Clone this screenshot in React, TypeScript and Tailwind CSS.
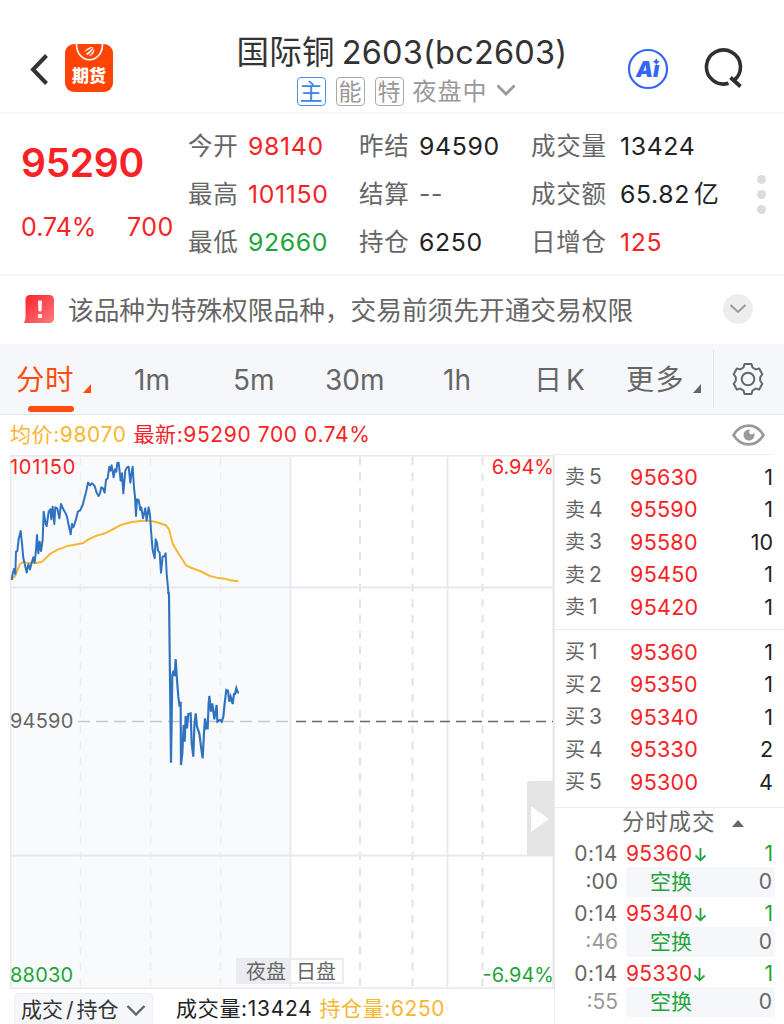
const asks = [
  { label: '卖5', price: '95630', qty: '1' },
  { label: '卖4', price: '95590', qty: '1' },
  { label: '卖3', price: '95580', qty: '10' },
  { label: '卖2', price: '95450', qty: '1' },
  { label: '卖1', price: '95420', qty: '1' },
]

const bids = [
  { label: '买1', price: '95360', qty: '1' },
  { label: '买2', price: '95350', qty: '1' },
  { label: '买3', price: '95340', qty: '1' },
  { label: '买4', price: '95330', qty: '2' },
  { label: '买5', price: '95300', qty: '4' },
]

const trades = [
  { time: '0:14', sec: ':00', price: '95360', secColor: 'text-[#666]' },
  { time: '0:14', sec: ':46', price: '95340', secColor: 'text-[#999]' },
  { time: '0:14', sec: ':55', price: '95330', secColor: 'text-[#999]' },
]

const stats = [
  [
    { label: '今开', value: '98140', color: 'text-[#f82226]' },
    { label: '最高', value: '101150', color: 'text-[#f82226]' },
    { label: '最低', value: '92660', color: 'text-[#1ea53a]' },
  ],
  [
    { label: '昨结', value: '94590', color: 'text-[#222]' },
    { label: '结算', value: '--', color: 'text-[#666]' },
    { label: '持仓', value: '6250', color: 'text-[#222]' },
  ],
  [
    { label: '成交量', value: '13424', color: 'text-[#222]' },
    { label: '成交额', value: '65.82', unit: '亿', color: 'text-[#222]' },
    { label: '日增仓', value: '125', color: 'text-[#f82226]' },
  ],
]

const openLine =
  '35,390 38,372 42,357 46,372 48,305 52,303 56,268 62,243 66,280 70,325 75,345 80,368 85,343 90,358 94,342 100,322 104,338 108,300 111,255 115,310 119,275 123,303 128,270 131,185 137,222 140,228 146,185 151,178 154,208 158,170 163,222 166,172 172,175 178,205 183,162 190,178 196,188 201,200 206,225 212,253 216,222 220,232 227,212 234,184 240,182 248,165 258,127 264,98 270,106 276,100 284,108 290,128 296,138 300,130 304,112 309,115 314,128 318,90 323,85 328,50 332,62 335,46 341,82 345,58 349,65 352,38 356,38 362,92 366,70 370,130 376,62 381,52 386,50 391,98 394,75 398,50 402,112 405,140 408,198 411,148 416,150 421,180 424,172 429,205 436,175 440,212 446,172 450,195 453,240 458,300 464,325 467,268 471,278 474,302 479,308 483,368 488,320 494,318 497,310 500,370 505,425 507,435'

const dropLine =
  '115,95 117,105 123,608 127,345 131,332 134,348 137,297 141,360 145,410 149,440 152,425 153,615 157,580 161,495 164,545 167,468 171,505 175,462 182,460 185,550 190,590 193,500 197,460 201,500 208,520 213,560 218,595 222,520 225,475 229,505 233,505 236,430 238,408 243,455 247,430 253,478 260,435 262,485 270,480 275,485 280,470 284,430 289,390 294,392 298,425 302,410 308,432 312,402 315,402 319,385 323,397 327,397'

const averageLine =
  '35,388 45,378 52,362 60,342 68,337 90,339 110,339 127,335 150,312 175,298 200,289 250,279 262,270 290,257 315,250 340,237 365,224 395,216 430,212 450,212 470,217 498,226 507,238 518,280 530,302 545,325 558,346 575,354 600,363 630,378 650,383 675,386 690,391 715,394'

function Header() {
  return (
    <header className="flex h-[114px] border-b-2 border-[#f6f6f6]">
      <div className="flex w-[190px] items-start pt-[44px] pl-[29px]">
        <svg width="20" height="50" viewBox="0 0 20 50" fill="none">
          <path d="M17.500 11.500L4 25.500L17.500 39.500" stroke="#333" strokeWidth="4" />
        </svg>
        <div className="ml-[16px] flex h-[48px] w-[48px] flex-col items-center overflow-hidden rounded-[9px] bg-[#ff4405]">
          <svg width="48" height="19" viewBox="0 0 48 19" fill="none">
            <path d="M11.500 0C11.500 21 37.500 21 37.500 0" stroke="#fff" strokeWidth="1.600" />
            <path d="M19 8C22 4 25 2.500 28.500 3C26 4 23 6 19 8ZM21 9.500C24 8 26.500 5 28.500 3.500C28 6 26 8.500 22.500 11ZM24 11.500C27 9.500 28.500 7 29 4.500C30 8 28 10.500 25 12Z" fill="#fff" />
          </svg>
          <span className="mt-[3px] text-[17px] leading-[20px] font-black text-white">期货</span>
        </div>
      </div>
      <div className="flex w-[424px] flex-col items-center">
        <h1 className="mt-[33px] text-[32.500px] leading-[40px] tracking-[0.200px] whitespace-nowrap text-[#333]">
          国际铜<span className="ml-[7px]">2603(bc2603)</span>
        </h1>
        <div className="mt-[4px] ml-[8px] flex items-center text-[24px] leading-[28px] text-[#999]">
          <span className="flex h-[29px] w-[29px] items-center justify-center rounded-[4px] border-[1.500px] border-[#4a90e8] text-[23px] text-[#3a87ea]">主</span>
          <span className="ml-[10px] flex h-[29px] w-[29px] items-center justify-center rounded-[4px] border-[1.500px] border-[#aaa] text-[23px]">能</span>
          <span className="ml-[10px] flex h-[29px] w-[29px] items-center justify-center rounded-[4px] border-[1.500px] border-[#aaa] text-[23px]">特</span>
          <span className="ml-[9px] tracking-[1px]">夜盘中</span>
          <svg className="mb-[4px] ml-[8px]" width="20" height="14" viewBox="0 0 20 14" fill="none">
            <path d="M1.500 2.500L10 11L18.500 2.500" stroke="#999" strokeWidth="2.800" />
          </svg>
        </div>
      </div>
      <div className="flex items-start pt-[48px] pl-[13px]">
        <svg width="42" height="42" viewBox="0 0 42 42">
          <circle cx="21" cy="21" r="19" fill="#fff" stroke="#3366f5" strokeWidth="2.200" />
          <text x="9" y="28.500" fontSize="21.500" fontWeight="900" fontStyle="italic" fill="#3366f5">
            Ai
          </text>
          <path d="M24 10H34V16.500H24Z" fill="#fff" />
          <path d="M29.300 10.200L30.500 12.500L32.800 13.700L30.500 14.900L29.300 17.200L28.100 14.900L25.800 13.700L28.100 12.500Z" fill="#3366f5" />
        </svg>
        <svg className="ml-[33px]" width="42" height="42" viewBox="0 0 42 42" fill="none">
          <path d="M27.500 35.200A17 17 0 1 1 33 32.300" transform="translate(-1 0)" stroke="#303030" strokeWidth="3.600" />
          <path d="M28.500 29.500L38.500 38.500" stroke="#303030" strokeWidth="3.800" />
        </svg>
      </div>
    </header>
  )
}

function Quote() {
  return (
    <section className="flex h-[162px] border-b-2 border-[#f6f6f6] text-[24.500px]">
      <div className="w-[188px] pl-[21px] text-[#f82226]">
        <div className="mt-[26px] text-[39px] leading-[46px] font-semibold tracking-[-0.300px]">95290</div>
        <div className="mt-[25px] flex text-[25px] leading-[32px]">
          <span className="w-[106px]">0.74%</span>
          <span className="tracking-[0.500px]">700</span>
        </div>
      </div>
      {stats.map((col, i) => (
        <div key={i} className={i === 2 ? 'flex flex-col pt-[8px] pl-px' : 'flex w-[171px] flex-col pt-[8px]'}>
          {col.map((s) => (
            <div key={s.label} className="flex h-12 items-center whitespace-nowrap">
              <span className={i === 2 ? 'w-[89px] tracking-[0.800px] text-[#666]' : 'w-[60px] tracking-[0.800px] text-[#666]'}>{s.label}</span>
              <span className={`text-[24.800px] leading-[46px] tracking-[0.650px] ${s.color}`}>
                {s.value}
                {'unit' in s && <span className="ml-[4px]">{s.unit}</span>}
              </span>
            </div>
          ))}
        </div>
      ))}
      <div className="mr-[18px] ml-auto flex flex-col justify-center gap-[6px]">
        <i className="size-[9px] rounded-full bg-[#dcdcdc]" />
        <i className="size-[9px] rounded-full bg-[#dcdcdc]" />
        <i className="size-[9px] rounded-full bg-[#dcdcdc]" />
      </div>
    </section>
  )
}

function Notice() {
  return (
    <section className="flex h-[68px] items-center pr-[31px] pl-[24px]">
      <svg className="mb-[2px]" width="30" height="28" viewBox="0 0 30 28">
        <defs>
          <linearGradient id="alert" x1="0" y1="0" x2="1" y2="1">
            <stop offset="0" stopColor="#fb2029" />
            <stop offset="1" stopColor="#ff7b7e" />
          </linearGradient>
        </defs>
        <path d="M1.500 5Q1.500 0 6.500 0H25Q30 0 30 5V23Q30 28 25 28H0Q1.500 25 1.500 22Z" fill="url(#alert)" />
        <path d="M14.500 6H17.500L17 16H15Z" fill="#fff" stroke="#fff" strokeLinejoin="round" />
        <circle cx="16" cy="21" r="2.200" fill="#fff" />
      </svg>
      <p className="ml-[14px] pt-px text-[25.700px] leading-[36px] whitespace-nowrap text-[#666]">该品种为特殊权限品种，交易前须先开通交易权限</p>
      <div className="mb-[2px] ml-auto flex size-[30px] items-center justify-center rounded-full bg-[#ededed]">
        <svg width="18" height="12" viewBox="0 0 18 12" fill="none">
          <path d="M1.500 2L9 9L16.500 2" stroke="#999" strokeWidth="2" />
        </svg>
      </div>
    </section>
  )
}

function Tabs() {
  return (
    <nav className="flex h-[71px] border-b border-[#e6e6ea] bg-[#f6f7fa] text-[28px] leading-[40px] text-[#666]">
      <div className="w-[134px] pt-[16px] pl-[16px] text-[#ff4d0d]">
        <div className="flex items-end whitespace-nowrap">
          <span className="text-[28.500px] tracking-[0.500px]">分时</span>
          <svg className="mb-[7px] ml-[9px]" width="8" height="9" viewBox="0 0 8 9">
            <path d="M8 0V9H0Z" fill="#ff4d0d" />
          </svg>
        </div>
        <div className="mt-[6px] ml-[12px] h-[6px] w-[46px] rounded-full bg-[#ff4d0d]" />
      </div>
      <span className="w-[99px] pt-[16px]">1m</span>
      <span className="w-[92px] pt-[16px]">5m</span>
      <span className="w-[118px] pt-[16px]">30m</span>
      <span className="w-[91px] pt-[16px]">1h</span>
      <span className="w-[92px] pt-[16px]">日<span className="ml-[4px]">K</span></span>
      <div className="flex w-[87px] items-start pt-[16px] whitespace-nowrap">
        <span className="tracking-[1.500px]">更多</span>
        <svg className="mt-[24px] ml-[8px]" width="8" height="9" viewBox="0 0 8 9">
          <path d="M8 0V9H0Z" fill="#666" />
        </svg>
      </div>
      <div className="my-[6px] w-px bg-[#e4e4e8]" />
      <svg className="mt-[18px] ml-[17px]" width="34" height="34" viewBox="-17 -17 34 34" fill="none" stroke="#666" strokeWidth="2" strokeLinejoin="round">
        <path d="M-3.500-15L3.500-15L4.500-11.500L7.700-9.600L11.200-10.500L14.300-4.800L12.200-1.800V1.800L14.300 4.800L11.200 10.500L7.700 9.600L4.500 11.500L3.500 15H-3.500L-4.500 11.500L-7.700 9.600L-11.200 10.500L-14.300 4.800L-12.200 1.800V-1.800L-14.300-4.800L-11.200-10.500L-7.700-9.600L-4.500-11.500Z" />
        <circle r="6.300" />
      </svg>
    </nav>
  )
}

function Chart() {
  return (
    <div className="relative h-[534px] w-[544px]">
      <svg width="544" height="534" viewBox="10 455 544 534" fill="none">
        <rect x="10" y="456" width="280" height="530" fill="#f8fafc" />
        <g stroke="#eeeef2" strokeWidth="1.500" strokeDasharray="8 7.800">
          <path d="M80.500 457V987M150.500 457V987M220.500 457V987" />
        </g>
        <g stroke="#e2e2ea" strokeWidth="2" strokeDasharray="8 7.800">
          <path d="M360 457V987M412.500 457V987M482.500 457V987" />
        </g>
        <path d="M10 587.500H554M10 855.500H554M290.500 457V987M447.500 457V987M10.500 455V989M10 988.500H554" stroke="#e8e8ef" strokeWidth="1.800" />
        <path d="M10 455.500H554M553.500 455V989" stroke="#e6e6ec" strokeWidth="2" />
        <path d="M78 721.500H290" stroke="#c6c8ca" strokeWidth="1.400" strokeDasharray="12 6" />
        <path d="M296 721.500H553" stroke="#666" strokeWidth="1.400" strokeDasharray="10 6" />
        <g transform="translate(0 450) scale(0.3333)" strokeLinejoin="round">
          <polyline points={averageLine} stroke="#f7b733" strokeWidth="6" />
          <polyline points={openLine} stroke="#2f73c0" strokeWidth="6" />
        </g>
        <polyline points={dropLine} transform="translate(130 560) scale(0.3333)" stroke="#2f73c0" strokeWidth="6.500" />
      </svg>
      <span className="absolute top-px left-0 text-[20px] leading-[22px] tracking-[0.700px] text-[#f82226]">101150</span>
      <span className="absolute top-px right-0 text-[20px] leading-[22px] text-[#f82226]">6.94%</span>
      <span className="absolute top-[255px] left-0 text-[20px] leading-[22px] tracking-[0.200px] text-[#666]">94590</span>
      <span className="absolute bottom-[3px] left-0 text-[20px] leading-[22px] tracking-[0.200px] text-[#1ea53a]">88030</span>
      <span className="absolute right-0 bottom-[3px] text-[20px] leading-[22px] text-[#1ea53a]">-6.94%</span>
      <div className="absolute bottom-[5px] left-[226px] flex h-[26px] text-[20px] leading-[28px] text-[#666]">
        <span className="w-[54px] bg-[#ebecf1] pl-[10px]">夜盘</span>
        <span className="w-[54px] border-2 border-l border-[#ebecf1] bg-white pl-[5px] leading-[24px]">日盘</span>
      </div>
      <div className="absolute top-[326px] right-[1px] flex h-[75px] w-[26px] items-center justify-end rounded-l-[3px] bg-[#e4e4e4] pr-[4px]">
        <svg width="18" height="26" viewBox="0 0 18 26">
          <path d="M0 0L18 13L0 26Z" fill="#fff" />
        </svg>
      </div>
    </div>
  )
}

function Book({ rows }: { rows: typeof asks }) {
  return (
    <div>
      {rows.map((r) => (
        <div key={r.label} className="flex h-[32.400px] items-center pr-[11px] pl-[10px] text-[21.500px]">
          <span className="w-[65px] text-[20px] text-[#666]">
            {r.label[0]}
            <span className="ml-[4px] text-[21px]">{r.label[1]}</span>
          </span>
          <span className="tracking-[0.300px] text-[#f82226]">{r.price}</span>
          <span className="ml-auto text-[#222]">{r.qty}</span>
        </div>
      ))}
    </div>
  )
}

function Sidebar() {
  return (
    <aside className="w-[229px]">
      <div className="mr-[11px] h-px bg-[#eee]" />
      <div className="h-[175px] border-b border-[#ebebee] pt-[6px]">
        <Book rows={asks} />
      </div>
      <div className="h-[178px] border-b border-[#ebebee] pt-[6px]">
        <Book rows={bids} />
      </div>
      <div className="flex h-[31px] items-center pb-[3px] pl-[67px] text-[22.500px] leading-[28px] text-[#666]">
        <span className="tracking-[0.800px]">分时成交</span>
        <svg className="mt-[2px] ml-[17px]" width="12" height="7" viewBox="0 0 12 7">
          <path d="M6 0L12 7H0Z" fill="#666" />
        </svg>
      </div>
      {trades.map((t) => (
        <div key={t.sec} className="h-[60px] pr-[9px] text-[21px] leading-[30px]">
          <div className="flex h-[28px] pr-[2px]">
            <span className="w-[63px] text-right tracking-[0.600px] text-[#666]">{t.time}</span>
            <span className="ml-[8px] tracking-[0.300px] text-[#f82226]">{t.price}</span>
            <svg className="mt-[9px] ml-px" width="13" height="14" viewBox="0 0 13 14" fill="none">
              <path d="M6.500 0V12M1.500 7.500L6.500 12.300L11.500 7.500" stroke="#1ea53a" strokeWidth="1.800" />
            </svg>
            <span className="ml-auto text-[#1ea53a]">1</span>
          </div>
          <div className="flex h-[30px] items-center">
            <span className={`w-[63px] text-right ${t.secColor}`}>{t.sec}</span>
            <div className="ml-[8px] flex h-[30px] flex-1 rounded-[3px] bg-[#f6f7fa] pr-[3px] pl-[24px] leading-[29px]">
              <span className="text-[#1ea53a]">空换</span>
              <span className="ml-auto text-[#666]">0</span>
            </div>
          </div>
        </div>
      ))}
    </aside>
  )
}

export default function App() {
  return (
    <div className="h-[1024px] w-[784px] overflow-hidden bg-white font-['Inter','Noto_Sans_CJK_SC',sans-serif]">
      <Header />
      <Quote />
      <Notice />
      <Tabs />
      <div className="flex h-[39px] items-center justify-between pr-[19px] pl-[10px] text-[21px]">
        <p className="tracking-[0.600px] whitespace-nowrap text-[#f82226]">
          <span className="mr-[7px] text-[#f7b733]">均价:98070</span>
          最新:95290 700 0.74%
        </p>
        <svg width="33" height="22" viewBox="0 0 33 22" fill="none">
          <path d="M1.500 11C9-1.500 24-1.500 31.500 11C24 23.500 9 23.500 1.500 11Z" stroke="#999" strokeWidth="2.600" />
          <circle cx="17" cy="11" r="5.500" fill="#999" />
          <circle cx="19.500" cy="8" r="2.400" fill="#fff" />
        </svg>
      </div>
      <main className="flex">
        <div className="w-[555px] border-r border-[#ebebee] pt-px pl-[10px]">
          <Chart />
          <div className="flex h-[36px] items-start text-[21px] leading-[32px] whitespace-nowrap">
            <div className="mt-[4px] ml-[4px] flex h-[34px] w-[139px] items-center rounded-[4px] border border-[#eeeef1] bg-[#f6f7fa] pl-[6px] text-[#333]">
              <span>成交<span className="mx-[3px]">/</span>持仓</span>
              <svg className="ml-[7px]" width="20" height="13" viewBox="0 0 20 13" fill="none">
                <path d="M1.500 2L10 10.500L18.500 2" stroke="#666" strokeWidth="2.400" />
              </svg>
            </div>
            <span className="mt-[4px] ml-[23px] tracking-[0.700px] text-[#222]">成交量:13424</span>
            <span className="mt-[4px] ml-[7px] tracking-[0.600px] text-[#f7b733]">持仓量:6250</span>
          </div>
        </div>
        <Sidebar />
      </main>
    </div>
  )
}
